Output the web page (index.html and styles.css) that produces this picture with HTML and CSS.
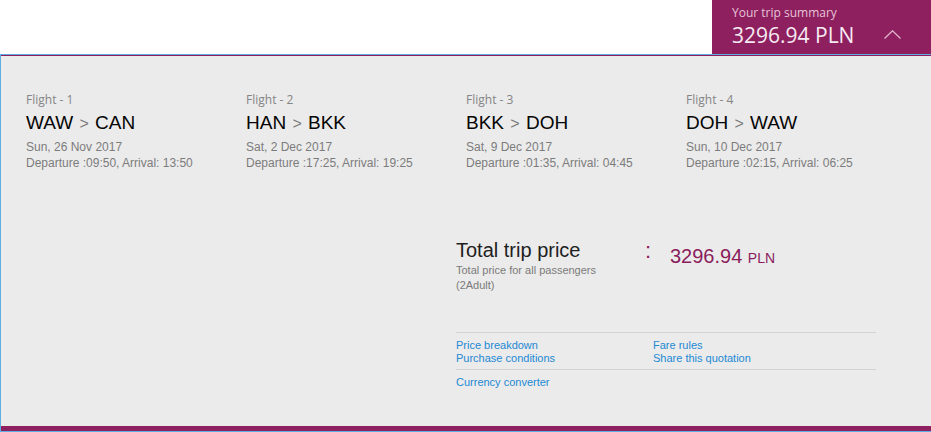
FILE: index.html
```html
<!DOCTYPE html>
<html lang="en">
<head>
<meta charset="utf-8">
<title>Trip summary</title>
<link rel="stylesheet" href="styles.css">
</head>
<body>
  <header class="topbar">
    <div class="summary">
      <div class="summary-text">
        <div class="summary-label">Your trip summary</div>
        <div class="summary-price">3296.94 PLN</div>
      </div>
      <svg class="chevron" width="18" height="9" viewBox="0 0 18 9" aria-hidden="true">
        <polyline points="0.5,8.5 8.5,0.8 16.5,8.5" fill="none" stroke="#e2b3cc" stroke-width="1.3"/>
      </svg>
    </div>
  </header>

  <section class="panel">
    <div class="flights">
      <div class="flight">
        <div class="flight-label">Flight - 1</div>
        <div class="route">WAW <span class="sep">&gt;</span> CAN</div>
        <div class="flight-date">Sun, 26 Nov 2017</div>
        <div class="flight-time">Departure :09:50, Arrival: 13:50</div>
      </div>
      <div class="flight">
        <div class="flight-label">Flight - 2</div>
        <div class="route">HAN <span class="sep">&gt;</span> BKK</div>
        <div class="flight-date">Sat, 2 Dec 2017</div>
        <div class="flight-time">Departure :17:25, Arrival: 19:25</div>
      </div>
      <div class="flight">
        <div class="flight-label">Flight - 3</div>
        <div class="route">BKK <span class="sep">&gt;</span> DOH</div>
        <div class="flight-date">Sat, 9 Dec 2017</div>
        <div class="flight-time">Departure :01:35, Arrival: 04:45</div>
      </div>
      <div class="flight">
        <div class="flight-label">Flight - 4</div>
        <div class="route">DOH <span class="sep">&gt;</span> WAW</div>
        <div class="flight-date">Sun, 10 Dec 2017</div>
        <div class="flight-time">Departure :02:15, Arrival: 06:25</div>
      </div>
    </div>

    <div class="pricing">
      <div class="total-row">
        <div class="total-info">
          <div class="total-title">Total trip price</div>
          <div class="total-note">Total price for all passengers<br>(2Adult)</div>
        </div>
        <div class="total-colon">:</div>
        <div class="total-amount">3296.94 <span class="currency">PLN</span></div>
      </div>

      <div class="links">
        <a class="link" href="#">Price breakdown</a>
        <a class="link" href="#">Fare rules</a>
        <a class="link" href="#">Purchase conditions</a>
        <a class="link" href="#">Share this quotation</a>
      </div>
      <div class="links links-single">
        <a class="link" href="#">Currency converter</a>
      </div>
    </div>

    <div class="panel-foot"></div>
  </section>
</body>
</html>
```

FILE: styles.css
```css
* {
  box-sizing: border-box;
}

html, body {
  margin: 0;
  padding: 0;
  background: #ffffff;
}

body {
  width: 931px;
  height: 432px;
  overflow: hidden;
  font-family: "Liberation Sans", Arial, sans-serif;
}

/* Top bar with the trip summary tab */
.topbar {
  display: flex;
  justify-content: flex-end;
  height: 54px;
}

.summary {
  width: 219px;
  height: 54px;
  background: #8e2060;
  padding: 5px 29px 0 20px;
  display: flex;
  justify-content: space-between;
  align-items: flex-start;
  font-family: "Open Sans", sans-serif;
}

.summary-label {
  font-size: 12px;
  line-height: 16px;
  color: #e7c3d7;
}

.summary-price {
  margin-top: 1px;
  font-size: 21px;
  line-height: 26px;
  color: #f6eaf1;
}

.chevron {
  margin-top: 25px;
}

/* Main grey panel */
.panel {
  height: 378px;
  background: #ebebeb;
  border-left: 1px solid #5eaee6;
  border-top: 1px solid #5eaee6;
  border-bottom: 1px solid #5eaee6;
  box-shadow: inset 0 1px 0 #8e2060;
  display: flex;
  flex-direction: column;
}

.flights {
  display: grid;
  grid-template-columns: repeat(4, 220px);
  padding: 37px 0 0 25px;
}

.flight-label {
  font-family: "Open Sans", sans-serif;
  font-size: 12px;
  line-height: 16px;
  color: #858585;
}

.route {
  margin-top: 4px;
  font-size: 19px;
  line-height: 22px;
  color: #050505;
}

.sep {
  font-size: 16px;
  color: #7a7a7a;
  margin: 0 1px;
}

.flight-date {
  margin-top: 4px;
  font-size: 12px;
  line-height: 16px;
  color: #7c7c7c;
}

.flight-time {
  font-size: 12px;
  line-height: 16px;
  color: #7c7c7c;
}

/* Price block */
.pricing {
  margin: 67px 0 0 455px;
  width: 420px;
}

.total-row {
  display: flex;
  align-items: flex-start;
}

.total-info {
  width: 189px;
}

.total-title {
  font-size: 20px;
  line-height: 24px;
  color: #1e1e1e;
}

.total-note {
  margin-top: 1px;
  font-size: 11px;
  line-height: 15px;
  color: #7a7a7a;
}

.total-colon {
  width: 25px;
  margin-top: 1px;
  font-size: 22px;
  line-height: 24px;
  color: #8e2060;
}

.total-amount {
  margin-top: 6px;
  font-size: 20px;
  line-height: 24px;
  color: #8a1c5b;
}

.currency {
  font-size: 14px;
}

.links {
  margin-top: 39px;
  border-top: 1px solid #d3d3d3;
  padding: 6px 0 4px;
  display: grid;
  grid-template-columns: 197px 1fr;
}

.links-single {
  margin-top: 0;
  padding-top: 6px;
}

.link {
  font-size: 11px;
  line-height: 13px;
  color: #2289d4;
  text-decoration: none;
}

.panel-foot {
  margin-top: auto;
  height: 5px;
  background: #8e2060;
}
```
